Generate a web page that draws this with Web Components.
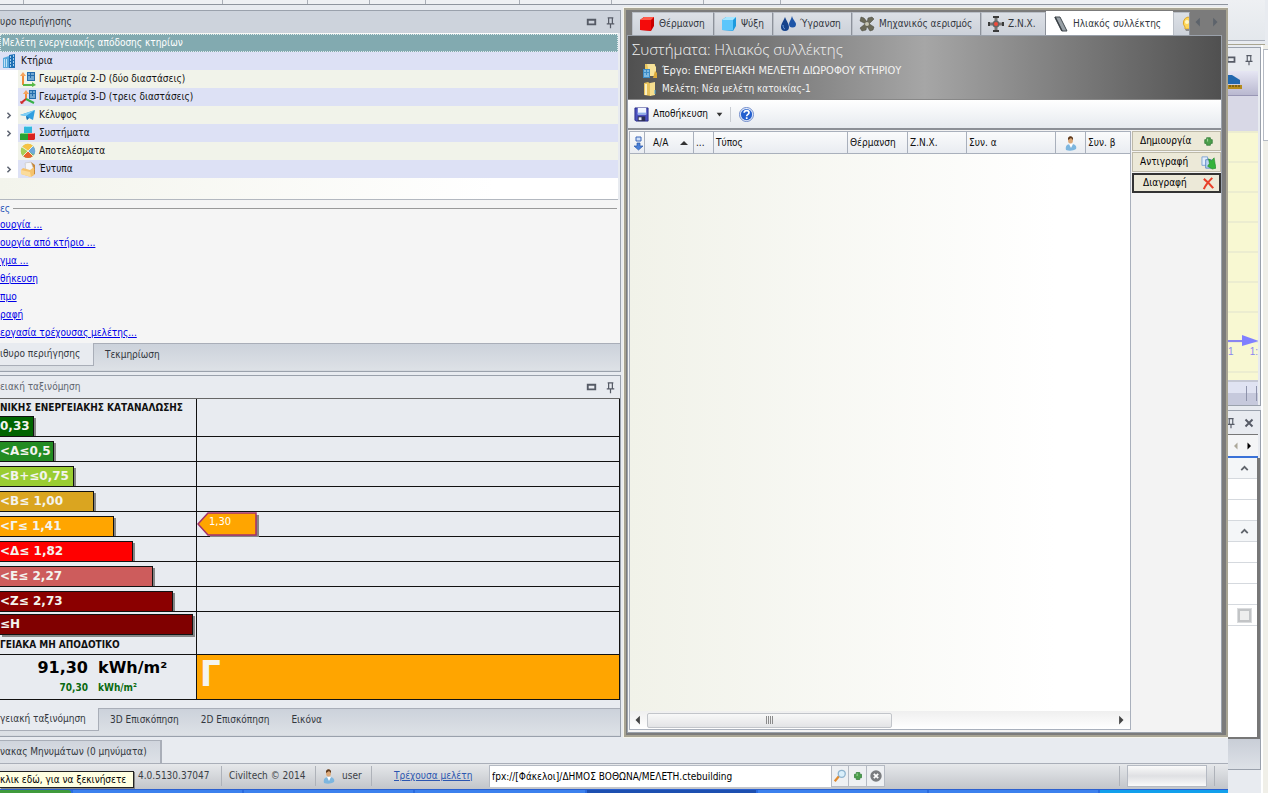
<!DOCTYPE html>
<html lang="el">
<head>
<meta charset="utf-8">
<title>Μελέτη ενεργειακής απόδοσης κτηρίων</title>
<style>
html,body{margin:0}
body{font:10px/18px "DejaVu Sans Condensed","DejaVu Sans",sans-serif;color:#111;background:#e8ebf0;min-height:100vh;display:flex;overflow-x:hidden}
desk-window{flex:1 1 0;min-width:0}
</style>
</head>
<body>
<desk-window>
  <ribbon-edge slot="top"></ribbon-edge>
  <dock-panel slot="left" heading="υρο περιήγησης" active>
    <study-tree></study-tree>
    <task-links></task-links>
    <tab-strip slot="tabs" tabs="ιθυρο περιήγησης|Τεκμηρίωση" first="94"></tab-strip>
  </dock-panel>
  <dock-panel slot="left" heading="ειακή ταξινόμηση">
    <energy-chart></energy-chart>
    <tab-strip slot="tabs" tabs="γειακή ταξινόμηση|3D Επισκόπηση|2D Επισκόπηση|Εικόνα" first="99"></tab-strip>
  </dock-panel>
  <systems-dialog slot="right"></systems-dialog>
  <message-bar slot="bottom"></message-bar>
  <status-bar slot="bottom"></status-bar>
  <task-bar slot="bottom"></task-bar>
</desk-window>
<back-window></back-window>

<script>
const ICONS = {
  building:'<path d="M1 5l6-2v12H1z" fill="#5aa9dc"/><path d="M7 2l6-1v14H7z" fill="#1f6fb5"/><path d="M2.500 6v8M4.500 6v8" stroke="#bfe3f7"/><path d="M8 4h1M8 7h1M8 10h1M11 3h1M11 6h1M11 9h1M11 12h1M8 13h1" stroke="#d5efff" stroke-width="1.500"/>',
  axes2:'<path d="M7 1h8v9H7z" fill="#236cad"/><path d="M8 3h2M11 3h3M8 6h2M11 6h3M8 8h6" stroke="#bfe3f7"/><path d="M3 14V3" stroke="#ee8a3a" stroke-width="2"/><path d="M0 5l3-4 3 4z" fill="#f4a35d"/><path d="M3 14h10" stroke="#58b947" stroke-width="2"/><path d="M12 11l4 3-4 2z" fill="#58b947"/>',
  axes3:'<path d="M9 1h7v9H9z" fill="#236cad"/><path d="M10 3h2M13 3h2M10 6h2M13 6h2M10 8h5" stroke="#bfe3f7"/><path d="M6 10V3" stroke="#ee8a3a" stroke-width="2"/><path d="M3 5l3-4 3 4z" fill="#f4a35d"/><path d="M6 10l-5 4" stroke="#cf2b2b" stroke-width="2"/><path d="M0 12l1 3 3-1z" fill="#cf2b2b"/><path d="M6 10l8 4" stroke="#35b045" stroke-width="2"/>',
  plane:'<path d="M0 8l15-5-2 10-4-2-2 2-1-4z" fill="#2f9fe0"/><path d="M0 8l15-5-9 6z" fill="#7fd0f5"/><path d="M6 9l1 4 2-2z" fill="#1971b0"/>',
  cubes:'<path d="M4 2l2-1h5l1 1v6H4z" fill="#33b7dc"/><path d="M4 2l2-1h5l1 1z" fill="#9be4f5"/><path d="M0 9l2-1h6v7H0z" fill="#2aa134"/><path d="M0 9l2-1h6v1z" fill="#7fdc7d"/><path d="M8 9l1-1h6v6l-1 1H8z" fill="#d92222"/><path d="M8 9l1-1h6l-1 1z" fill="#ff8a7d"/>',
  pie:'<circle cx="8" cy="8" r="7" fill="#7dbb45"/><path d="M8 8L2 4a7 7 0 0 1 11-1z" fill="#f6c344"/><path d="M8 8l-5 5a7 7 0 0 1-1-9z" fill="#a8cf58"/><path d="M8 8l5 5a7 7 0 0 1-10 0z" fill="#e8642c"/><path d="M8 8l5-5a7 7 0 0 1 1 9z" fill="#6fa9d8"/><path d="M8 8L2 4M8 8l5-5M8 8l-5 5M8 8l5 5" stroke="#fff" stroke-width=".8"/>',
  folderdoc:'<path d="M5 3l6-2 4 3v9l-3 2z" fill="#c8893a"/><path d="M5 2l6-1 3 8-8 2z" fill="#f6f6f8" stroke="#bbb" stroke-width=".5"/><path d="M1 9l2-2 7 2 4-3v8l-3 2-10-3z" fill="#f5c36e"/><path d="M1 9l9 2 1 5-10-3z" fill="#fbdc9c"/>',
  redcube:'<path d="M1 4l4-3h10v9l-3 5-11-1z" fill="#c80000"/><path d="M1 4l4-3h10l-3 3z" fill="#ff5a4a"/><path d="M1 4h11v10.500L1 14z" fill="#f40b0b"/>',
  bluecube:'<path d="M1 4l4-3h10v9l-3 5-11-1z" fill="#1d9ade"/><path d="M1 4l4-3h10l-3 3z" fill="#a6e6ff"/><path d="M1 4h11v10.500L1 14z" fill="#5cc6fb"/>',
  drops:'<path d="M5 1c2 5 4 7 4 10a4 4 0 0 1-8 0C1 8 3 6 5 1z" fill="#16438c"/><path d="M12 0c1 4 4 6 4 8a3.500 3.500 0 0 1-7 0c0-2 2-4 3-8z" fill="#1d55a8"/><path d="M3 9c0 2 1 4 2 4" stroke="#6f9fe0" fill="none"/>',
  fan:'<g fill="#6b6a58" stroke="#45453a" stroke-width=".5"><path d="M7 8L1 5l1-4 3 1 4 5z"/><path d="M8 7l1-5 4-1 2 2-5 5z"/><path d="M9 7l6 4-1 3-3 1-4-6z"/><path d="M8 9l-1 5-4 1-2-3 5-4z"/></g><circle cx="8" cy="8" r="2" fill="#c8c7b4"/>',
  valve:'<path d="M8 1v14M1 8h14" stroke="#777" stroke-width="3"/><path d="M5 1h6M5 15h6M1 6v4M15 6v4" stroke="#3a3a3a" stroke-width="2"/><circle cx="8" cy="8" r="3.500" fill="#666"/><circle cx="8" cy="8" r="2" fill="#f04a3a"/>',
  panel:'<path d="M2 1l5 0 7 14-5 0z" fill="#98a0a6" stroke="#444b50"/><path d="M2 1l7 14" stroke="#3b4247" stroke-width="1.500"/>',
  bulb:'<path d="M8 1a6 6 0 0 1 3 10v2H5v-2A6 6 0 0 1 8 1z" fill="#ffd75a" stroke="#dba52b"/><path d="M5 13h6v2H6z" fill="#8d8d8d"/><circle cx="7" cy="6" r="2" fill="#fff7c9"/>',
  project:'<path d="M3 1h10v12H3z" fill="#e9c75e"/><path d="M5 1h7l2 3v9H8z" fill="#f6e29a"/><path d="M1 6h7v9H1z" fill="#3d8cc6"/><path d="M2 8h2M5 8h2M2 11h2M5 11h2M2 13h5" stroke="#c3e7fa"/><path d="M13 8l2 2v5h-4z" fill="#dba93a"/>',
  folder:'<path d="M2 2l4-1 3 2v12l-7-1z" fill="#e7c25b"/><path d="M8 2l5-1v13l-5 1z" fill="#f5de8e"/><path d="M4 3v11" stroke="#fbf0c0" stroke-width="2"/><path d="M13 9v4" stroke="#4ba4d8"/>',
  save:'<path d="M1 1h14v14H2l-1-1z" fill="#4a4fc0" stroke="#2b2f86"/><path d="M4 1h9v7H4z" fill="#f2f6ff"/><path d="M4 7h9" stroke="#8fb0ea" stroke-width="2"/><path d="M4 10h8v5H4z" fill="#2b2f55"/><path d="M5 11h3v3H5z" fill="#e8e8f2"/>',
  help:'<circle cx="8" cy="8" r="7.500" fill="#e8eefb" stroke="#6a86c8"/><circle cx="8" cy="8" r="6" fill="#2460cf"/><path d="M5.500 6.200c.2-3 5.200-3 5.200 0 0 1.700-2.500 1.700-2.500 3.600M8.200 11v1.800" stroke="#fff" stroke-width="1.800" fill="none"/>',
  down:'<path d="M6 2h5v4H6z" fill="#cfe0f8" stroke="#3c66b8"/><path d="M7 8h3v3h3l-4.500 4L4 11h3z" fill="#4a80d8" stroke="#2a56a8" stroke-width=".7"/>',
  user:'<path d="M3 15c-1-4 1-6 5-6s6 2 5 5c-3 2-7 2-10 1z" fill="#7db6df"/><path d="M6 9l2 4 2-4z" fill="#fff"/><ellipse cx="7.500" cy="5" rx="2.500" ry="3.500" fill="#dba878"/><path d="M5 5c-1-5 6-5 5 0L8 3z" fill="#5e3a1e"/>',
  plus:'<path d="M6 4h4v2h2v4h-2v2H6v-2H4V6h2z" fill="#4c9f4c" stroke="#2d7a34" stroke-width=".8"/><path d="M7 5v3" stroke="#a9dba3"/>',
  copy:'<path d="M1 2h6v9H1z" fill="#e3eefb" stroke="#7ea3d4"/><path d="M5 5h6v9H5z" fill="#bdd5f2" stroke="#5d89c4"/><path d="M8 4l3 2 3-3 1 6 1 5-4 1-5-3 2-3z" fill="#35b23a" stroke="#1d8427" stroke-width=".6"/>',
  cross:'<path d="M3 3c4 3 7 6 10 10M12 2C8 6 5 9 3 14" stroke="#e8402a" stroke-width="2.200" fill="none"/>',
  lens:'<path d="M2 14l5-6" stroke="#e08a2e" stroke-width="2.500"/><circle cx="10" cy="5.500" r="4" fill="#d9effb" stroke="#8fb4cf" stroke-width="1.500"/>',
  stop:'<circle cx="8" cy="8" r="6.500" fill="#7b7d80"/><path d="M5.500 5.500l5 5M10.500 5.500l-5 5" stroke="#fff" stroke-width="2"/>',
  max:'<path d="M4 5h8v5H4z" fill="none" stroke="#565b66" stroke-width="2"/>',
  pin:'<path d="M5 3h6M6 3v6M10 3v6M4 9.500h8M8 10v4" stroke="#565b66" fill="none" stroke-width="1.300"/>',
  close:'<path d="M4 4l8 8M12 4l-8 8" stroke="#565b66" stroke-width="2.200"/>',
  right:'<path d="M5 1l7 7-7 7z" fill="currentColor"/>',
  left:'<path d="M11 1L4 8l7 7z" fill="currentColor"/>',
  chev:'<path d="M5 4l4 4-4 4" stroke="#5d6370" stroke-width="2.200" fill="none"/>',
  up:'<path d="M4 10l4-4 4 4" stroke="#60656c" stroke-width="2.200" fill="none"/>',
  sort:'<path d="M4 10l4-4 4 4z" fill="#333"/>',
  drop:'<path d="M5 6h6l-3 4z" fill="#333"/>',
  grip:'<path d="M4.500 4v8M6.500 4v8M8.500 4v8M10.500 4v8" stroke="#8b8b8b"/>',
  ruler:'<path d="M0 1h4l8 5v4H0z" fill="#2268ae"/><path d="M0 11h14v4H0z" fill="#b58b1c"/><path d="M2 11v2M5 11v2M8 11v2M11 11v2" stroke="#4f3b08"/>'
};
function define(name, css, html){
  customElements.define(name, class extends HTMLElement{
    connectedCallback(){
      if(this.shadowRoot) return;
      const root = this.attachShadow({mode:"open"});
      root.innerHTML = `<style>:host,*{box-sizing:border-box}button,input,a{font:inherit}button{color:inherit;margin:0}${css}</style>` + (typeof html==="function" ? html(this) : html);
    }
  });
}
define("ui-icon",
  `:host{display:inline-flex;flex:none;width:var(--s,16px);height:var(--s,16px)}svg{width:100%;height:100%;display:block}`,
  el=>`<svg viewBox="0 0 16 16" aria-hidden="true">${ICONS[el.getAttribute("name")]}</svg>`);

define("desk-window",
  `:host{display:flex;flex-direction:column;min-height:100vh;background:#e8ebf0}
   .work{flex:1;display:grid;grid-template-columns:622px minmax(0,1fr)}
   .left{display:flex;flex-direction:column;gap:3px;padding:5px 0 3px;min-width:0}
   .right{display:flex;padding:3px 0 3px 2px;min-width:0}`,
  `<slot name="top"></slot><div class="work"><div class="left"><slot name="left"></slot></div><div class="right"><slot name="right"></slot></div></div><slot name="bottom"></slot>`);

define("ribbon-edge",
  `:host{display:flex;height:5px;background:#eef0f3;border-bottom:1px solid #8f959e;overflow:hidden}
   i{border-right:1px solid #a9aeb6;height:4px}`,
  [24,199,85,62,56,94,92,92,77].map(w=>`<i style="width:${w}px"></i>`).join(""));

define("dock-panel",
  `:host{display:block;border:1px solid #9aa1ac;border-left:0;background:#e8ebf0;margin-right:1px}
   header{display:flex;align-items:center;height:22px;padding-right:2px;color:#60656f;background:#e8ebf0}
   :host([active]) header{background:#cdd3dc;color:#33373d}
   h2{font:inherit;flex:1;margin:0}
   ui-icon{margin-left:4px;--s:15px}`,
  el=>`<header><h2>${el.getAttribute("heading")}</h2><ui-icon name="max"></ui-icon><ui-icon name="pin"></ui-icon></header><slot></slot><slot name="tabs"></slot>`);

define("tree-row",
  `:host{display:grid;grid-template-columns:18px 1fr;height:18px}
   :host([level="0"]){grid-template-columns:0 1fr}
   .exp{display:flex;align-items:center;justify-content:center;background:#fff}
   .exp ui-icon{--s:11px}
   .row{display:flex;align-items:center;gap:3px;background:#f1f3ea;padding-left:2px;min-width:0;white-space:nowrap}
   :host([alt]) .row{background:#dde1f5}
   :host([head]) .row{background:#82aab0;color:#fff;outline:1px dotted #dfeaec;outline-offset:-1px}`,
  el=>`<span class="exp">${el.hasAttribute("open")?'<ui-icon name="chev"></ui-icon>':''}</span><span class="row">${el.getAttribute("icon")?`<ui-icon name="${el.getAttribute("icon")}"></ui-icon>`:''}<slot></slot></span>`);

define("study-tree",
  `:host{display:block;height:167px;padding-top:1px;margin-right:2px;border-bottom:1px solid #b3b8c0;background:linear-gradient(90deg,#f3f4ec,#fff 80%)}`,
  `<tree-row head level="0">Μελέτη ενεργειακής απόδοσης κτηρίων</tree-row>
   <tree-row alt level="0" icon="building">Κτήρια</tree-row>
   <tree-row icon="axes2">Γεωμετρία 2-D (δύο διαστάσεις)</tree-row>
   <tree-row alt icon="axes3">Γεωμετρία 3-D (τρεις διαστάσεις)</tree-row>
   <tree-row open icon="plane">Κέλυφος</tree-row>
   <tree-row alt open icon="cubes">Συστήματα</tree-row>
   <tree-row icon="pie">Αποτελέσματα</tree-row>
   <tree-row alt open icon="folderdoc">Έντυπα</tree-row>`);

define("task-links",
  `:host{display:block;height:143px;background:#f5f5f5;padding-top:1px}
   h3{font:inherit;color:#2a55b8;display:flex;align-items:center;gap:3px;margin:0;height:15px}
   h3::after{content:"";flex:1;border-top:1px solid #9a9a9a;margin-right:3px}
   a{display:block;width:max-content;color:#0000e8}`,
  `<h3>ες</h3>`+["ουργία ...","ουργία από κτήριο ...","γμα ...","θήκευση","πμο","ραφή","εργασία τρέχουσας μελέτης..."].map(t=>`<a href="#">${t}</a>`).join(""));

define("tab-strip",
  `:host{display:flex;height:28px;align-items:flex-start;background:linear-gradient(#ccd2db,#dde1e6);border-top:1px solid #a9aeb8;border-bottom:1px solid #d5d9df;color:#33373d}
   button{border:0;background:none;height:22px;padding:0 11px;white-space:nowrap}
   button:first-of-type{background:#e8ebf0;border:solid #a9aeb8;border-width:0 1px 1px 0;padding:0;text-align:left;margin-top:-1px;height:23px}`,
  el=>el.getAttribute("tabs").split("|").map((t,i)=>`<button type="button"${i?'':` style="width:${el.getAttribute("first")}px"`}>${t}</button>`).join(""));

define("energy-chart",
  `:host{display:block;border-top:1px solid #666;padding-bottom:8px}
   table{width:100%;border-collapse:separate;border-spacing:0;table-layout:fixed}
   col:first-child{width:197px}
   td{padding:0;height:25px;border:solid #111;border-width:0 1px 1px 0;vertical-align:bottom}
   .last td{height:43px;vertical-align:top}.sum td{height:45px;vertical-align:top}
   b{display:block;white-space:nowrap}.first b{line-height:17px}
   .bar{font:bold 12px/19px "DejaVu Sans",sans-serif;color:#f4f4ee;height:20px;border:1px solid #111;border-width:1px 1px 0 0;box-shadow:2px 2px 0 #858585;clip-path:inset(0 -3px 0 0)}
   .last .bar{clip-path:none;margin:2px 0 2px;height:21px;border-bottom-width:1px}
   .last b{line-height:16px}
   .arrow{display:block;width:64px;height:25px}
   .mark{display:grid;height:24px}
   .mark>*{grid-area:1/1}
   .mark span{padding:1px 0 0 12px;color:#fff;font-size:11px;line-height:18px}
   .total{display:grid;grid-template-columns:88px auto;column-gap:10px;font-family:"DejaVu Sans",sans-serif;font-weight:bold;text-align:right}
   .total span:nth-child(even){text-align:left}
   .big{font-size:16px;line-height:25px;color:#000}.small{font:bold 10px/16px "DejaVu Sans Condensed",sans-serif;color:#0a6a10}
   .sum td.grade{background:#ffa500;font:bold 36px/38px "DejaVu Sans Condensed",sans-serif;color:#f4f4f0;padding-left:3px}`,
  ()=>{
    const rows=[["<Α≤0,5",54,"#228b22"],["<Β+≤0,75",74,"#9acd32"],["<Β≤ 1,00",94,"#daa520"],["<Γ≤ 1,41",114,"#ffa500"],["<Δ≤ 1,82",133,"#f00"],["<Ε≤ 2,27",153,"#cd5c5c"],["<Ζ≤ 2,73",173,"#8b0000"]];
    const bar=(t,w,c)=>`<div class="bar" style="width:${w}px;background:${c}">${t.replace("<","&lt;")}</div>`;
    return `<table><colgroup><col><col></colgroup>
      <tr class="first"><td><b>ΝΙΚΗΣ ΕΝΕΡΓΕΙΑΚΗΣ ΚΑΤΑΝΑΛΩΣΗΣ</b>${bar("0,33",34,"#006400")}</td><td></td></tr>
      ${rows.map((r,i)=>`<tr><td>${bar(...r)}</td><td>${i===3?`<div class="mark"><svg class="arrow" viewBox="0 0 64 25"><path d="M11 3h51v22H13z" fill="#858585"/><path d="M1 12L11 1h48v22H11z" fill="#ffa500" stroke="#a3306a" stroke-width="1.500"/></svg><span>1,30</span></div>`:""}</td></tr>`).join("")}
      <tr class="last"><td>${bar("≤Η",193,"#800000")}<b>ΓΕΙΑΚΑ ΜΗ ΑΠΟΔΟΤΙΚΟ</b></td><td></td></tr>
      <tr class="sum"><td><div class="total"><span class="big">91,30</span><span class="big">kWh/m²</span><span class="small">70,30</span><span class="small">kWh/m²</span></div></td><td class="grade">Γ</td></tr></table>`;
  });

define("systems-dialog",
  `:host{flex:1;display:flex;flex-direction:column;min-width:0;background:#7b7b7b;border:2px solid #a8a493;box-shadow:0 0 0 1px #f4f3ea;padding:1px 4px 2px 1px}
   nav{display:flex;align-items:flex-end;height:24px;padding-left:5px;color:#33373d;overflow:hidden;flex:none}
   nav button{display:flex;align-items:center;gap:4px;height:23px;border:1px solid #b9bec6;border-right-color:#8d929b;border-bottom:0;background:linear-gradient(#dce0e6,#ccd1d9);padding:0;padding-left:6px;white-space:nowrap;flex:none;overflow:hidden}
   nav button.on{height:24px;background:#fff;border-color:#fff;padding-left:6px}
   nav>ui-icon{margin:0 0 8px 3px;--s:10px;color:#5d636b}
   nav>ui-icon+ui-icon{margin-left:7px}
   .inner{flex:1;display:flex;flex-direction:column;border:1px solid #9aa1ab;background:#f3f3f3;min-height:0}
   header{height:64px;flex:none;color:#f2f2f2;background:linear-gradient(90deg,#505050,#a6a6a6 50%,#505050);border-bottom:1px solid #888;padding:4px 0 0 4px;display:flex;flex-direction:column}
   h1{font:15px/18px "Open Sans","DejaVu Sans Condensed",sans-serif;font-weight:300;margin:0 0 4px}
   header p{margin:0;padding-left:10px;display:flex;align-items:center;gap:4px;font-size:11px;white-space:nowrap;height:18px}
   header p.m{font-size:10px}
   .tools{display:flex;align-items:center;height:30px;flex:none;background:linear-gradient(#fff,#e6eaef);border-bottom:2px solid #8b8f96;padding-left:6px}
   .tools button{display:flex;align-items:center;gap:4px;border:0;background:none;padding:0;--s:15px}
   .tools button+button{border-left:1px solid #c8ccd2;padding-left:8px;margin-left:3px}
   .body{flex:1;display:grid;grid-template-columns:minmax(0,1fr) 90px;padding:1px 0 2px 1px}
   .list{display:flex;flex-direction:column;border:1px solid #a9b0bc;background:linear-gradient(90deg,#f1f2e9,#fff 85%)}
   table{border-collapse:separate;border-spacing:0;table-layout:fixed;width:100%}
   th{font:inherit;text-align:left;height:22px;padding:0 0 0 2px;white-space:nowrap;background:linear-gradient(#fafbfc,#e9ecf1);border-right:1px solid #a9b0bc;border-bottom:1px solid #a9b0bc;vertical-align:middle;overflow:hidden}
   th:last-child{border-right:0}
   th.i{padding:0;text-align:center;line-height:0}
   th.s{padding-left:8px}th.s ui-icon{float:right;margin:1px 1px 0}
   .scroll{margin-top:auto;height:18px;display:flex;align-items:center;background:linear-gradient(#efefef,#fff);color:#444}
   .scroll>ui-icon{--s:10px;margin:0 4px 0 3px}
   .thumb{width:49%;height:15px;margin-right:auto;border:1px solid #c2c5ca;border-radius:2px;background:linear-gradient(#f8f8f8,#e3e4e6);display:flex;align-items:center;justify-content:center}
   aside{display:flex;flex-direction:column;gap:1px;padding-left:1px}
   aside button{display:flex;align-items:center;height:20px;background:#ece9d8;border:1px solid #bdb9a8;padding:0 4px 0 7px;color:#000}
   aside button:last-child{border:2px solid #333;padding:0 3px 0 9px}
   aside button ui-icon{margin-left:auto;--s:15px}`,
  ()=>{
    const tabs=[["redcube","Θέρμανση",82],["bluecube","Ψύξη",59],["drops","Ύγρανση",79],["fan","Μηχανικός αερισμός",129],["valve","Ζ.Ν.Χ.",65],["panel","Ηλιακός συλλέκτης",127],["bulb","",17]];
    return `<nav>${tabs.map((t,i)=>`<button type="button" class="${i===5?'on':''}" style="width:${t[2]}px"><ui-icon name="${t[0]}"></ui-icon>${t[1]}</button>`).join("")}<ui-icon name="left"></ui-icon><ui-icon name="right"></ui-icon></nav>
    <div class="inner">
    <header><h1>Συστήματα: Ηλιακός συλλέκτης</h1><p><ui-icon name="project"></ui-icon>Έργο: ΕΝΕΡΓΕΙΑΚΗ ΜΕΛΕΤΗ ΔΙΩΡΟΦΟΥ ΚΤΗΡΙΟΥ</p><p class="m"><ui-icon name="folder"></ui-icon>Μελέτη: Νέα μελέτη κατοικίας-1</p></header>
    <div class="tools"><button type="button"><ui-icon name="save"></ui-icon>Αποθήκευση<ui-icon name="drop"></ui-icon></button><button type="button" aria-label="Βοήθεια"><ui-icon name="help"></ui-icon></button></div>
    <div class="body"><div class="list"><table><colgroup><col style="width:15px"><col style="width:49px"><col style="width:20px"><col><col style="width:60px"><col style="width:59px"><col style="width:89px"><col style="width:30px"><col style="width:44px"></colgroup>
    <tr><th class="i"><ui-icon name="down"></ui-icon></th><th class="s">Α/Α<ui-icon name="sort"></ui-icon></th><th>...</th><th>Τύπος</th><th>Θέρμανση</th><th>Ζ.Ν.Χ.</th><th>Συν. α</th><th class="i"><ui-icon name="user"></ui-icon></th><th>Συν. β</th></tr></table>
    <div class="scroll"><ui-icon name="left"></ui-icon><div class="thumb"><ui-icon name="grip"></ui-icon></div><ui-icon name="right"></ui-icon></div></div>
    <aside><button type="button">Δημιουργία<ui-icon name="plus"></ui-icon></button><button type="button">Αντιγραφή<ui-icon name="copy"></ui-icon></button><button type="button">Διαγραφή<ui-icon name="cross"></ui-icon></button></aside></div></div>`;
  });

define("message-bar",
  `:host{display:flex;height:24px;border-bottom:1px solid #a9aeb8;color:#33373d}
   button{width:162px;border:solid #a9aeb8;border-width:1px 2px 0 0;background:linear-gradient(#d0d5dd,#dde1e7);padding:0;text-align:left}`,
  `<button type="button">νακας Μηνυμάτων (0 μηνύματα)</button>`);

define("status-bar",
  `:host{display:flex;align-items:stretch;height:25px;background:linear-gradient(#e6e8eb,#c2c5ca);color:#3b3f46;position:relative;white-space:nowrap}
   span,a{display:flex;align-items:center;gap:6px;margin:2px 0 3px}
   span{border-right:1px solid #aeb2b9}
   .tip{position:absolute;left:0;top:7px;margin:0;height:17px;border:1px solid #222;border-left:0;background:#ffffe1;color:#000;padding-right:3px;width:134px;box-shadow:1px 1px 0 #888}
   .v{padding-left:138px;width:222px}.c{width:94px;padding-left:7px}.u{width:56px;padding-left:5px;gap:5px}
   a{border:0;margin-left:22px;width:95px;color:#2c56b0}
   input{width:342px;border:1px solid #b5bac3;border-width:1px 0 0 1px;background:#fff;padding:0 2px;color:#000;margin:1px 0 2px}
   button{width:18px;border:1px solid #b5bac3;border-left-width:0;background:#eef0f3;padding:0;margin:1px 0 2px;--s:14px;display:flex;align-items:center;justify-content:center}
   button:first-of-type{border-left-width:1px}
   .grow{flex:1;margin-right:7px}
   .box{width:80px;border:1px solid #b5bac3;background:linear-gradient(#fafafa,#dfe0e3 50%,#fafafa);margin:1px 6px 2px 0}
   .end{width:2px;margin-right:13px}`,
  `<span class="v">4.0.5130.37047</span><span class="c">Civiltech © 2014</span><span class="u"><ui-icon name="user"></ui-icon>user</span><a href="#">Τρέχουσα μελέτη</a>
   <input type="text" aria-label="Τρέχουσα μελέτη" value="fpx://[Φάκελοι]/ΔΗΜΟΣ ΒΟΘΩΝΑ/ΜΕΛΕΤΗ.ctebuilding"><button type="button" aria-label="Αναζήτηση"><ui-icon name="lens"></ui-icon></button><button type="button" aria-label="Προσθήκη"><ui-icon name="plus"></ui-icon></button><button type="button" aria-label="Διακοπή"><ui-icon name="stop"></ui-icon></button>
   <span class="grow"></span><div class="box"></div><span class="end"></span><span class="tip" role="tooltip">κλικ εδώ, για να ξεκινήσετε</span>`);

define("task-bar",
  `:host{display:flex;height:5px;border-top:1px solid #2a5fd0;background:#2a6be0}
   i{background:#3c81ee;margin-right:2px;flex:1}i:first-of-type{flex:none;width:71px;background:#3f9a3c;border-radius:0 3px 0 0}
   i.d{background:#1d4fb0}i:last-of-type{background:#12a0ec;margin:0;flex:none;width:128px}`,
  `<i></i><i></i><i></i><i></i><i class="d"></i><i></i><i></i><i></i>`);

define("back-window",
  `:host{display:flex;flex-direction:column;flex:none;width:40px;background:#e8ebf0}
   .ribbon{background:linear-gradient(#eef0f3,#e3e7ec);border-bottom:1px solid #a9a590;box-shadow:inset 0 -3px 0 #e8ebf0,inset 0 -4px 0 #a9aeb8;margin-right:3px;height:45px}
   .cols{flex:1;display:grid;grid-template-columns:33px 7px;min-height:0}
   .edge{background:#f0efe8;border-left:2px solid #fff;padding-top:4px}
   .edge::before{content:"";display:block;height:90px;background:#fff;border:1px solid #b5bac3;border-right:0}
   .main{display:flex;flex-direction:column;padding-top:2px}
   .view{border:solid #9aa1ac;border-width:1px 1px 1px 0;height:359px;display:flex;flex-direction:column}
   .bar{height:23px;display:flex;align-items:center;justify-content:flex-end;gap:4px;padding-right:4px;--s:14px;overflow:hidden;flex:none}
   .tool{height:25px;background:linear-gradient(#e6e6f4,#b9b8d0);border-bottom:1px solid #9896b4;margin-right:2px;overflow:hidden}
   .band{height:35px;background:#d8d8e6;margin-right:2px}
   .plan{flex:1;margin-right:2px;background:linear-gradient(#0000 28px,#ecedd0 28px) 0 2px/100% 30px,#f8f8d2;color:#8a86f0;font:10px/14px "Liberation Sans",sans-serif;padding-top:202px;overflow:hidden}
   .plan svg{display:block;width:31px;height:14px}
   .plan div{display:flex;justify-content:space-between;margin-top:-2px}
   .foot{height:25px;margin-right:2px;background:linear-gradient(#e0e3f2 50%,#c6c9dc 50%);border-top:2px solid #c5c8d4;display:flex;justify-content:flex-end;align-items:center;gap:9px;padding-right:1px}
   .foot i{width:1px;height:15px;background:#8e93ab}
   .props{margin-top:4px;border:solid #9aa1ac;border-width:1px 1px 1px 0;flex:1;max-height:360px;display:flex;flex-direction:column}
   .nav{height:24px;border-top:1px solid #777;border-bottom:2px solid #3a72d8;background:#f4f5f6;display:flex;align-items:center;justify-content:flex-end;gap:5px;--s:8px;padding-right:5px;margin-right:2px;color:#000;flex:none}
   .grid{background:#fff;border:solid #777;border-width:0 3px 2px 0;flex:1}
   .grid div{height:21px;border-bottom:1px solid #d5d9de;display:flex;justify-content:flex-end;align-items:center;padding-right:6px;--s:13px}
   .grid .h{background:#f4f6f8}
   .grid input{appearance:none;width:13px;height:13px;margin:0;border:2px solid #c2c4c6;outline:1px solid #dadcde;background:#eee}
   .tabs{height:30px;background:linear-gradient(#c9ced7,#dde1e7)}
   .below{height:24px}`,
  `<div class="ribbon"></div><div class="cols"><div class="main">
   <div class="view"><div class="bar"><ui-icon name="max"></ui-icon><ui-icon name="pin"></ui-icon></div><div class="tool"><ui-icon name="ruler" style="margin-top:3px"></ui-icon></div><div class="band"></div>
   <div class="plan"><svg viewBox="0 0 31 14"><path d="M0 8h16" stroke="#8a86f0" stroke-width="2"/><path d="M14 2l17 6-17 5z" fill="#8080ff"/></svg><div><span>1</span><span>1:</span></div></div>
   <div class="foot"><i></i><i></i></div></div>
   <div class="props"><div class="bar"><ui-icon name="pin"></ui-icon><ui-icon name="close"></ui-icon></div><div class="nav"><ui-icon name="left" style="color:#aca899"></ui-icon><ui-icon name="right"></ui-icon></div>
   <div class="grid"><div class="h"><ui-icon name="up"></ui-icon></div><div></div><div></div><div class="h"><ui-icon name="up"></ui-icon></div><div></div><div></div><div></div><div><input type="checkbox" aria-label="Επιλογή"></div></div><div class="tabs"></div></div>
   <div class="below"></div></div><div class="edge"></div></div>`);
</script>
</body>
</html>
